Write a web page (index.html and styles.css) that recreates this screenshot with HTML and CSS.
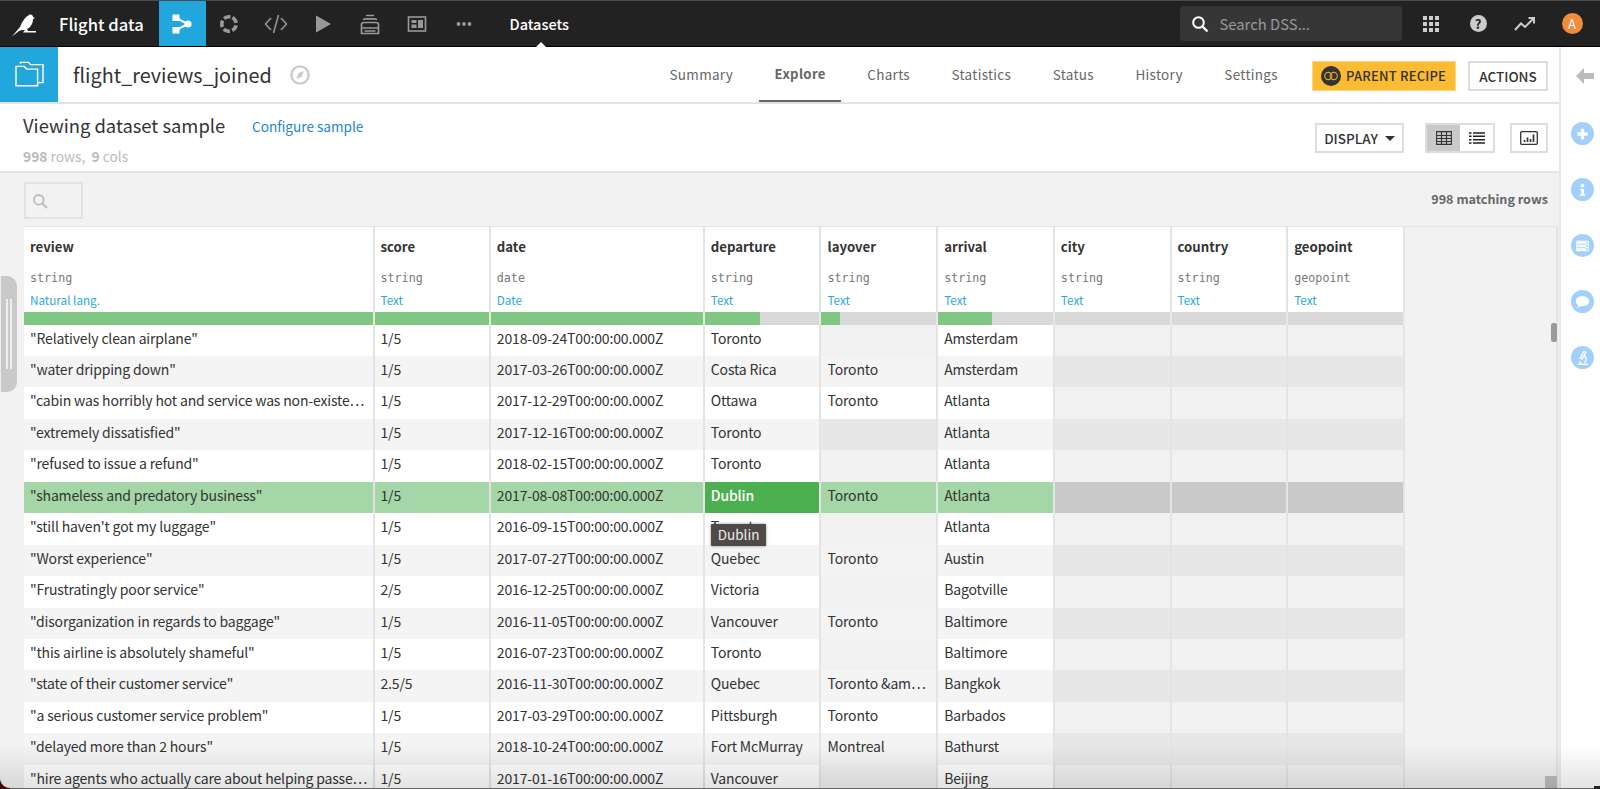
FILE: index.html
```html
<!DOCTYPE html>
<html lang="en">
<head>
<meta charset="utf-8">
<title>flight_reviews_joined</title>
<link rel="stylesheet" href="styles.css">
</head>
<body>
<div class="app">
  <header class="topbar">
    <a class="logo"><svg viewBox="10 12 28 28" width="28" height="28"><path fill="#fff" d="M12 37.5 20 28C22 23 25 18 29 16 31 15 33 16 33 18L35 19 33 20C33 24 31 28 27 30L28 32 36 32 36 33.5 23 33.5 25 31C22 31 20 31 19 32Z"/></svg></a>
    <span class="project">Flight data</span>
    <a class="tool tool-on"><svg viewBox="0 0 24 24" width="24" height="24"><path d="M6 6 18 12 6 18" fill="none" stroke="#fff" stroke-width="2"/><rect x="2.5" y="2.5" width="7" height="6.5" fill="#fff"/><rect x="2.5" y="15" width="7" height="6.5" fill="#fff"/><circle cx="18" cy="12" r="3.6" fill="#fff"/></svg></a>
    <a class="tool"><svg viewBox="0 0 24 24" width="24" height="24"><circle cx="12" cy="12" r="7.2" fill="none" stroke="#999" stroke-width="3.6" stroke-dasharray="6.6 2.45" transform="rotate(-62 12 12)"/></svg></a>
    <a class="tool"><svg viewBox="0 0 24 24" width="24" height="24"><path d="M7 6 1.5 12 7 18M17 6 22.5 12 17 18M14.5 3 9.5 21" fill="none" stroke="#999" stroke-width="1.5"/></svg></a>
    <a class="tool"><svg viewBox="0 0 24 24" width="24" height="24"><path d="M5 3.5 20 12 5 20.5Z" fill="#999"/></svg></a>
    <a class="tool"><svg viewBox="0 0 24 24" width="24" height="24"><path d="M8 3.500H16M5.500 8C5.500 7 6.500 6.800 7.500 6.800H16.500C17.500 6.800 18.500 7 18.500 8M3.500 21.500V12.500C3.500 11.200 4.500 10.500 6 10.500H18C19.500 10.500 20.500 11.200 20.500 12.500V21.500ZM4 16H20M6.500 19H17.500" fill="none" stroke="#999" stroke-width="1.700"/></svg></a>
    <a class="tool"><svg viewBox="0 0 24 24" width="24" height="24"><rect x="3.5" y="5" width="17" height="14" fill="none" stroke="#999" stroke-width="1.6"/><rect x="6.5" y="8" width="5" height="3" fill="#999"/><rect x="6.5" y="12.5" width="5" height="3.5" fill="#999"/><rect x="13" y="8" width="5" height="8" fill="#999"/></svg></a>
    <a class="tool"><svg viewBox="0 0 24 24" width="24" height="24"><circle cx="6.5" cy="12" r="1.9" fill="#999"/><circle cx="12" cy="12" r="1.9" fill="#999"/><circle cx="17.5" cy="12" r="1.9" fill="#999"/></svg></a>
    <a class="crumb">Datasets</a>
    <div class="search">
      <svg viewBox="0 0 20 20" width="20" height="20"><circle cx="8.5" cy="8.5" r="5.3" fill="none" stroke="#fff" stroke-width="2"/><path d="M12.5 12.5 17.5 17.5" stroke="#fff" stroke-width="2.4"/></svg>
      <span>Search DSS...</span>
    </div>
    <a class="topicon"><svg viewBox="0 0 18 18" width="18" height="18"><g fill="#ccc"><rect x="1" y="1" width="4" height="4"/><rect x="7" y="1" width="4" height="4"/><rect x="13" y="1" width="4" height="4"/><rect x="1" y="7" width="4" height="4"/><rect x="7" y="7" width="4" height="4"/><rect x="13" y="7" width="4" height="4"/><rect x="1" y="13" width="4" height="4"/><rect x="7" y="13" width="4" height="4"/><rect x="13" y="13" width="4" height="4"/></g></svg></a>
    <a class="topicon"><span class="help">?</span></a>
    <a class="topicon"><svg viewBox="0 0 22 16" width="22" height="16"><path d="M1 14 7 7.5 11 11 19 3M14.5 2H20V7.5" fill="none" stroke="#ccc" stroke-width="2"/></svg></a>
    <a class="topicon"><span class="avatar">A</span></a>
  </header>

  <div class="body">
    <main class="main">
      <nav class="nav">
        <div class="fold"><svg viewBox="0 0 34 30" width="31" height="27"><path d="M2 27.5V6H11L14 9H26V27.5ZM7 3V1.5H16L18 4H32V24H26" fill="none" stroke="#fff" stroke-width="1.6"/></svg></div>
        <h1 class="dsname">flight_reviews_joined</h1>
        <svg class="compass" viewBox="0 0 20 20" width="20" height="20"><circle cx="10" cy="10" r="8.6" fill="none" stroke="#ccc" stroke-width="2.4"/><path d="M14 6 11.5 12 6.5 14 8.5 8Z" fill="#ccc"/></svg>
        <div class="tabs">
          <a class="tab">Summary</a>
          <a class="tab tab-on">Explore</a>
          <a class="tab">Charts</a>
          <a class="tab">Statistics</a>
          <a class="tab">Status</a>
          <a class="tab">History</a>
          <a class="tab">Settings</a>
        </div>
        <a class="btn-parent"><svg viewBox="0 0 20 20" width="20" height="20"><circle cx="10" cy="10" r="10" fill="#333"/><circle cx="7.3" cy="10" r="3.6" fill="none" stroke="#d9a62e" stroke-width="1.2"/><circle cx="12.7" cy="10" r="3.6" fill="none" stroke="#d9a62e" stroke-width="1.2"/></svg>PARENT RECIPE</a>
        <a class="btn-actions">ACTIONS</a>
      </nav>

      <section class="sample">
        <div class="sample-info">
          <div class="sample-title"><h2>Viewing dataset sample</h2><a>Configure sample</a></div>
          <p class="sample-count"><b>998</b> rows,&nbsp; <b>9</b> cols</p>
        </div>
        <a class="btn-display">DISPLAY<i class="caret"></i></a>
        <div class="toggle">
          <a class="toggle-on"><svg viewBox="0 0 16 14" width="16" height="14"><path d="M.6.6H15.4V13.4H.6ZM.6 4.5H15.4M.6 7.5H15.4M.6 10.5H15.4M5.5.6V13.4M10.5.6V13.4" fill="none" stroke="#333" stroke-width="1.1"/></svg></a>
          <a><svg viewBox="0 0 16 12" width="16" height="12"><path d="M0 1H2.5M4 1H16M0 4.300H2.500M4 4.300H16M0 7.700H2.500M4 7.700H16M0 11H2.500M4 11H16" stroke="#222" stroke-width="1.5"/></svg></a>
        </div>
        <a class="btn-chart"><svg viewBox="0 0 18 14" width="18" height="14"><rect x=".7" y=".7" width="16.600" height="12.600" rx="1" fill="none" stroke="#333" stroke-width="1.300"/><path d="M4.500 11V9M7.500 11V6.500M10.500 11V8M13.500 11V3.500" stroke="#333" stroke-width="1.700"/></svg></a>
      </section>

      <section class="filter">
        <div class="filter-box"><svg viewBox="0 0 16 16" width="16" height="16"><circle cx="6.800" cy="6.800" r="4.800" fill="none" stroke="#bbb" stroke-width="1.800"/><path d="M10.500 10.500 15 15" stroke="#bbb" stroke-width="2"/></svg></div>
        <span class="matching">998 matching rows</span>
      </section>

      <section class="table-wrap">
        <div class="table">
          <div class="row head">
            <div class="hcell"><b>review</b><code>string</code><a>Natural lang.</a></div>
            <div class="hcell"><b>score</b><code>string</code><a>Text</a></div>
            <div class="hcell"><b>date</b><code>date</code><a>Date</a></div>
            <div class="hcell"><b>departure</b><code>string</code><a>Text</a></div>
            <div class="hcell"><b>layover</b><code>string</code><a>Text</a></div>
            <div class="hcell"><b>arrival</b><code>string</code><a>Text</a></div>
            <div class="hcell"><b>city</b><code>string</code><a>Text</a></div>
            <div class="hcell"><b>country</b><code>string</code><a>Text</a></div>
            <div class="hcell"><b>geopoint</b><code>geopoint</code><a>Text</a></div>
          </div>
          <div class="row bars">
            <div class="bar"><i style="width:100%"></i></div>
            <div class="bar"><i style="width:100%"></i></div>
            <div class="bar"><i style="width:100%"></i></div>
            <div class="bar"><i style="width:48%"></i></div>
            <div class="bar"><i style="width:16%"></i></div>
            <div class="bar"><i style="width:47%"></i></div>
            <div class="bar"></div>
            <div class="bar"></div>
            <div class="bar"></div>
          </div>
          <div class="row"><div class="c">"Relatively clean airplane"</div><div class="c">1/5</div><div class="c">2018-09-24T00:00:00.000Z</div><div class="c">Toronto</div><div class="c e"></div><div class="c">Amsterdam</div><div class="c e"></div><div class="c e"></div><div class="c e"></div></div>
          <div class="row"><div class="c">"water dripping down"</div><div class="c">1/5</div><div class="c">2017-03-26T00:00:00.000Z</div><div class="c">Costa Rica</div><div class="c">Toronto</div><div class="c">Amsterdam</div><div class="c e"></div><div class="c e"></div><div class="c e"></div></div>
          <div class="row"><div class="c">"cabin was horribly hot and service was non-existe…</div><div class="c">1/5</div><div class="c">2017-12-29T00:00:00.000Z</div><div class="c">Ottawa</div><div class="c">Toronto</div><div class="c">Atlanta</div><div class="c e"></div><div class="c e"></div><div class="c e"></div></div>
          <div class="row"><div class="c">"extremely dissatisfied"</div><div class="c">1/5</div><div class="c">2017-12-16T00:00:00.000Z</div><div class="c">Toronto</div><div class="c e"></div><div class="c">Atlanta</div><div class="c e"></div><div class="c e"></div><div class="c e"></div></div>
          <div class="row"><div class="c">"refused to issue a refund"</div><div class="c">1/5</div><div class="c">2018-02-15T00:00:00.000Z</div><div class="c">Toronto</div><div class="c e"></div><div class="c">Atlanta</div><div class="c e"></div><div class="c e"></div><div class="c e"></div></div>
          <div class="row sel"><div class="c">"shameless and predatory business"</div><div class="c">1/5</div><div class="c">2017-08-08T00:00:00.000Z</div><div class="c focus">Dublin<span class="tip">Dublin</span></div><div class="c">Toronto</div><div class="c">Atlanta</div><div class="c e"></div><div class="c e"></div><div class="c e"></div></div>
          <div class="row"><div class="c">"still haven't got my luggage"</div><div class="c">1/5</div><div class="c">2016-09-15T00:00:00.000Z</div><div class="c">Toronto</div><div class="c e"></div><div class="c">Atlanta</div><div class="c e"></div><div class="c e"></div><div class="c e"></div></div>
          <div class="row"><div class="c">"Worst experience"</div><div class="c">1/5</div><div class="c">2017-07-27T00:00:00.000Z</div><div class="c">Quebec</div><div class="c">Toronto</div><div class="c">Austin</div><div class="c e"></div><div class="c e"></div><div class="c e"></div></div>
          <div class="row"><div class="c">"Frustratingly poor service"</div><div class="c">2/5</div><div class="c">2016-12-25T00:00:00.000Z</div><div class="c">Victoria</div><div class="c e"></div><div class="c">Bagotville</div><div class="c e"></div><div class="c e"></div><div class="c e"></div></div>
          <div class="row"><div class="c">"disorganization in regards to baggage"</div><div class="c">1/5</div><div class="c">2016-11-05T00:00:00.000Z</div><div class="c">Vancouver</div><div class="c">Toronto</div><div class="c">Baltimore</div><div class="c e"></div><div class="c e"></div><div class="c e"></div></div>
          <div class="row"><div class="c">"this airline is absolutely shameful"</div><div class="c">1/5</div><div class="c">2016-07-23T00:00:00.000Z</div><div class="c">Toronto</div><div class="c e"></div><div class="c">Baltimore</div><div class="c e"></div><div class="c e"></div><div class="c e"></div></div>
          <div class="row"><div class="c">"state of their customer service"</div><div class="c">2.5/5</div><div class="c">2016-11-30T00:00:00.000Z</div><div class="c">Quebec</div><div class="c">Toronto &amp;am…</div><div class="c">Bangkok</div><div class="c e"></div><div class="c e"></div><div class="c e"></div></div>
          <div class="row"><div class="c">"a serious customer service problem"</div><div class="c">1/5</div><div class="c">2017-03-29T00:00:00.000Z</div><div class="c">Pittsburgh</div><div class="c">Toronto</div><div class="c">Barbados</div><div class="c e"></div><div class="c e"></div><div class="c e"></div></div>
          <div class="row"><div class="c">"delayed more than 2 hours"</div><div class="c">1/5</div><div class="c">2018-10-24T00:00:00.000Z</div><div class="c">Fort McMurray</div><div class="c">Montreal</div><div class="c">Bathurst</div><div class="c e"></div><div class="c e"></div><div class="c e"></div></div>
          <div class="row"><div class="c">"hire agents who actually care about helping passe…</div><div class="c">1/5</div><div class="c">2017-01-16T00:00:00.000Z</div><div class="c">Vancouver</div><div class="c e"></div><div class="c">Beijing</div><div class="c e"></div><div class="c e"></div><div class="c e"></div></div>
        </div>
      </section>
    </main>

    <aside class="side">
      <svg class="side-back" viewBox="0 0 18 16" width="18" height="16"><path d="M8 0 0 8 8 16V11H18V5H8Z" fill="#bbb"/></svg>
      <a class="dot"><svg viewBox="0 0 24 24" width="24" height="24"><path d="M12 6.500V17.500M6.500 12H17.500" stroke="#fff" stroke-width="3.400"/></svg></a>
      <a class="dot"><svg viewBox="0 0 24 24" width="24" height="24"><circle cx="12" cy="7.500" r="2" fill="#fff"/><path d="M9.500 11H13.500V16.500H15V18H9V16.500H10.800V12.500H9.500Z" fill="#fff"/></svg></a>
      <a class="dot"><svg viewBox="0 0 24 24" width="24" height="24"><path d="M6 7H15V17H6Z" fill="#fff" opacity=".85"/><path d="M6 10.200H18M6 13.600H18M15.500 7V17M6 7H18V17H6Z" fill="none" stroke="#fff" stroke-width="1"/><path d="M6 10.200H15M6 13.600H15" stroke="#a3cffc" stroke-width=".8"/></svg></a>
      <a class="dot"><svg viewBox="0 0 24 24" width="24" height="24"><path d="M12 6C7.500 6 5 8.500 5 11.200 5 13 6 14.400 7.500 15.200L6.500 18.500 10.500 16.300C16 16.800 19 14.500 19 11.200 19 8.500 16.500 6 12 6Z" fill="#fff"/></svg></a>
      <a class="dot"><svg viewBox="0 0 24 24" width="24" height="24"><path d="M13.500 5 15.500 6 11.500 13 9.500 12ZM7 18.500H17.500M14 9.500C16.500 11 16.500 15 14 17M9.500 15C9 16 10 17.500 11 17.500" fill="none" stroke="#fff" stroke-width="1.400"/></svg></a>
    </aside>
  </div>

  <div class="handle"><i></i><i></i></div>
  <div class="thumb-v"></div>
  <div class="thumb-c"></div>
  <div class="fade"></div>
  <div class="corner-l"></div>
  <div class="corner-r"></div>
</div>
</body>
</html>
```
FILE: styles.css
```css
* { box-sizing: border-box; }
html, body { margin: 0; height: 100%; overflow: hidden; background: #fff; }
body { font-family: "Noto Sans CJK SC", "Noto Sans", sans-serif; color: #333; }
a { color: inherit; text-decoration: none; }
h1, h2, p { margin: 0; font-weight: 400; }

.app { position: relative; width: 1600px; height: 789px; overflow: hidden; display: flex; flex-direction: column; }

/* top bar */
.topbar { flex: none; height: 47px; display: flex; align-items: center; background: #222; border-top: 1px solid #4b4b4b; border-bottom: 1px solid #000; position: relative; }
.logo { width: 59px; flex: none; display: flex; padding-left: 10px; margin-top: 2px; }
.project { width: 99.500px; flex: none; color: #fff; font-size: 16.600px; line-height: 24px; font-weight: 500; }
.tool { width: 47px; height: 45px; flex: none; display: flex; align-items: center; justify-content: center; }
.tool-on { background: #22a7dd; }
.crumb { margin-left: 22px; width: 58px; flex: none; color: #fff; font-size: 14.500px; line-height: 22px; font-weight: 500; position: relative; }
.crumb::after { content: ""; position: absolute; left: 26px; top: 29px; border: 5px solid transparent; border-top: 0; border-bottom-color: #fff; }
.search { margin-left: 612px; width: 222px; height: 35px; flex: none; display: flex; align-items: center; gap: 10px; padding-left: 10px; background: #363636; border-radius: 4px; color: #999; font-size: 14.800px; line-height: 22px; }
.topicon { width: 47px; flex: none; display: flex; align-items: center; justify-content: center; }
.search + .topicon { margin-left: 6px; }
.help { width: 17px; height: 17px; border-radius: 50%; background: #ccc; color: #222; font-size: 13px; line-height: 17px; font-weight: 700; text-align: center; }
.avatar { width: 21px; height: 21px; border-radius: 50%; background: #f28c38; color: #fff; font-size: 13px; line-height: 21px; text-align: center; }

.body { flex: 1; min-height: 0; display: flex; }
.main { width: 1559px; flex: none; display: flex; flex-direction: column; min-height: 0; background: #f2f2f2; }

/* nav */
.nav { flex: none; height: 57px; display: flex; align-items: center; background: #fff; border-bottom: 2px solid #e2e2e2; padding-right: 11px; }
.fold { width: 58px; height: 55px; flex: none; display: flex; align-items: center; justify-content: center; background: #22a7dd; }
.dsname { margin-left: 15px; font-size: 19.800px; line-height: 32px; color: #333; width: 201px; flex: none; white-space: nowrap; }
.compass { margin-left: 16px; flex: none; }
.tabs { margin-left: 344px; display: flex; height: 55px; flex: none; gap: 10.500px; }
.tab { padding: 0 15.500px; height: 55px; line-height: 54px; font-size: 13.500px; letter-spacing: .3px; color: #666; white-space: nowrap; }
.tab-on { font-size: 13.200px; font-weight: 700; border-bottom: 2px solid #666; }
.btn-parent { margin-left: auto; align-self: flex-start; margin-top: 14px; width: 144px; height: 30px; flex: none; display: flex; align-items: center; gap: 5px; padding-left: 8px; background: #fbbc33; border: 1px solid #fdd77e; color: #333; font-size: 13px; line-height: 20px; font-weight: 500; letter-spacing: .2px; white-space: nowrap; }
.btn-parent svg { flex: none; }
.btn-actions { margin-left: 12px; align-self: flex-start; margin-top: 14px; width: 80px; height: 30px; flex: none; border: 2px solid #ddd; text-align: center; color: #333; font-size: 13.500px; line-height: 26px; font-weight: 500; }

/* sample header */
.sample { flex: none; height: 69px; display: flex; align-items: flex-start; background: #fff; border-bottom: 2px solid #e4e4e4; padding-right: 11px; }
.sample-info { width: 1315px; flex: none; padding: 7px 0 0 23px; }
.sample-title { display: flex; align-items: center; height: 28px; }
.sample-title h2 { font-size: 18.400px; line-height: 28px; color: #333; width: 229px; flex: none; white-space: nowrap; }
.sample-title a { color: #1a86d0; font-size: 13.600px; line-height: 22px; margin-top: 1px; }
.sample-count { margin-top: 7px; font-size: 13.800px; line-height: 20px; color: #bbb; }
.sample-count b { font-weight: 700; }
.btn-display { margin-top: 19px; width: 89px; height: 30px; flex: none; display: flex; align-items: center; justify-content: center; gap: 7px; border: 2px solid #ddd; color: #333; font-size: 13.500px; font-weight: 500; line-height: 26px; }
.caret { border: 5px solid transparent; border-bottom: 0; border-top-color: #333; }
.toggle { margin: 19px 0 0 21px; width: 70px; height: 30px; flex: none; display: flex; border: 2px solid #ddd; }
.toggle a { flex: 1; display: flex; align-items: center; justify-content: center; }
.toggle .toggle-on { background: #c9c9c9; }
.btn-chart { margin: 19px 0 0 15px; width: 38px; height: 30px; flex: none; display: flex; align-items: center; justify-content: center; border: 2px solid #ddd; }

/* filter */
.filter { flex: none; height: 53px; display: flex; align-items: flex-start; justify-content: space-between; padding: 9px 11px 0 24px; }
.filter-box { width: 59px; height: 37px; border: 2px solid #e2e2e2; display: flex; align-items: center; padding-left: 6px; }
.matching { margin-top: 7px; font-size: 12.600px; line-height: 20px; font-weight: 700; color: #666; }

/* table */
.table-wrap { flex: 1; min-height: 0; margin: 0 1px 0 24px; border-top: 1px solid #e4e4e4; border-right: 2px solid #e4e4e4; overflow: hidden; }
.table { width: 1380px; }
.row { display: grid; grid-template-columns: 350.500px 116.300px 214px repeat(6, 116.700px); height: 31.450px; background: #fff; font-size: 14px; letter-spacing: -.16px; color: #333; }
.row:nth-child(even) { background: #f4f4f4; }
.c { position: relative; padding: 0 6px; line-height: 27px; white-space: nowrap; overflow: hidden; border-right: 2px solid #e4e4e4; }
.c.e { background: #f1f1f1; }
.row:nth-child(even) .c.e { background: #e7e7e7; }

.row.head { height: 85px; background: #fff; letter-spacing: 0; }
.hcell { display: flex; flex-direction: column; padding: 10px 6px 0; border-right: 2px solid #e4e4e4; }
.hcell b { font-size: 13.200px; line-height: 20px; font-weight: 700; color: #333; }
.hcell code { margin-top: 13px; font-family: "DejaVu Sans Mono", monospace; font-size: 11.700px; line-height: 16px; color: #777; }
.hcell a { margin-top: 6px; font-size: 11.700px; line-height: 16px; color: #29a8e0; }

.row.bars { height: 12.600px; background: #fff; }
.bar { background: #d9d9d9; border-right: 2px solid #e8e8e8; }
.bar i { display: block; height: 100%; background: #81c784; }

.row.sel, .row.sel:nth-child(even) { background: #a5d6a7; }
.row.sel .c.e, .row.sel:nth-child(even) .c.e { background: #c9c9c9; }
.row.sel .focus { background: #4caf50; color: #fff; font-weight: 500; overflow: visible; }
.tip { position: absolute; z-index: 3; left: 6px; top: 42px; height: 22px; padding: 0 7px; background: #4f4a48; color: #eee; font-size: 13.500px; letter-spacing: 0; line-height: 21px; font-weight: 400; box-shadow: 0 0 3px rgba(0,0,0,.45); border-radius: 1px; }

/* sidebar */
.side { flex: 1; display: flex; flex-direction: column; align-items: flex-start; background: #fff; border-left: 2px solid #e9e9e9; padding: 21px 0 0 10px; }
.side-back { margin: 0 0 38px 5px; flex: none; }
.dot { width: 23px; height: 23px; margin-bottom: 33px; border-radius: 50%; background: #a3cffc; display: flex; align-items: center; justify-content: center; flex: none; }

/* overlays */
.handle { position: absolute; left: 0; top: 276px; width: 17px; height: 116px; background: #c9c9c9; border-radius: 0 10px 10px 0; border-left: 1px solid #eee; display: flex; justify-content: center; gap: 2px; padding: 23px 0; }
.handle i { width: 2px; background: #eee; }
.thumb-v { position: absolute; left: 1551px; top: 323px; width: 6px; height: 19px; background: #9a9a9a; border-radius: 2px; }
.thumb-c { position: absolute; left: 1545px; top: 776px; width: 12px; height: 12px; background: #bdbdbd; }
.fade { position: absolute; left: 0; right: 0; bottom: 0; height: 45px; background: linear-gradient(rgba(0,0,0,0), rgba(0,0,0,.11)); border-bottom: 1px solid #666; pointer-events: none; }
.corner-l { position: absolute; left: 0; bottom: 0; width: 10px; height: 11px; background: radial-gradient(circle at 100% 0, transparent 9.500px, #3c0a10 10.500px); }
.corner-r { position: absolute; right: 0; bottom: 0; width: 6px; height: 3px; background: #222; }
```
